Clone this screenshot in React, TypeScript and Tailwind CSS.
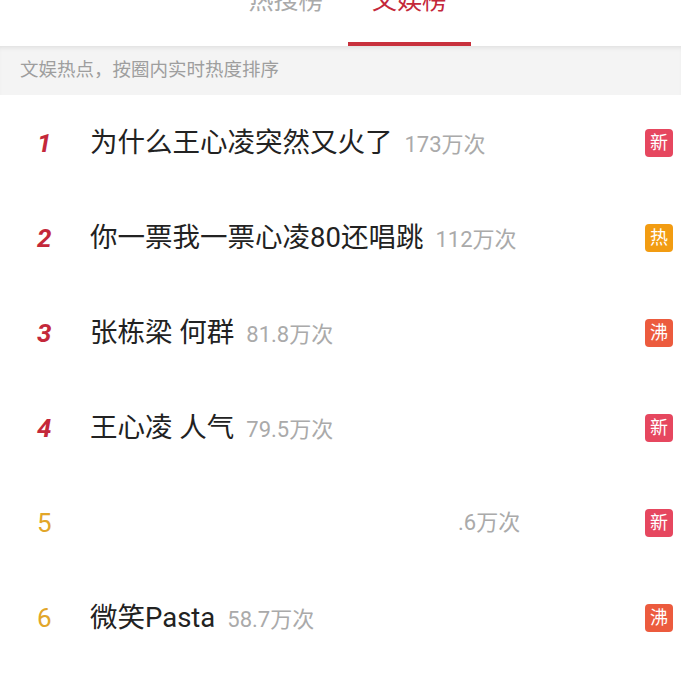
import React from 'react';

type Badge = 'new' | 'hot' | 'boil';

interface Item {
  rank: number;
  title: string;
  count: string;
  badge: Badge;
}

const items: Item[] = [
  { rank: 1, title: '为什么王心凌突然又火了', count: '173万次', badge: 'new' },
  { rank: 2, title: '你一票我一票心凌80还唱跳', count: '112万次', badge: 'hot' },
  { rank: 3, title: '张栋梁 何群', count: '81.8万次', badge: 'boil' },
  { rank: 4, title: '王心凌 人气', count: '79.5万次', badge: 'new' },
  { rank: 5, title: '', count: '.6万次', badge: 'new' },
  { rank: 6, title: '微笑Pasta', count: '58.7万次', badge: 'boil' },
];

const badgeStyle: Record<Badge, { label: string; cls: string }> = {
  new: { label: '新', cls: 'bg-[#e6475f]' },
  hot: { label: '热', cls: 'bg-[#f29c12]' },
  boil: { label: '沸', cls: 'bg-[#ec5b3e]' },
};

function Row({ item }: { item: Item }) {
  const top = item.rank <= 4;
  const b = badgeStyle[item.badge];
  return (
    <div className="flex items-center h-[95px] pl-[37px] pr-[8px]">
      <span
        className={`w-[53px] text-[26px] leading-none ${
          top ? 'text-[#c4283a] italic font-bold' : 'text-[#e2a629]'
        }`}
      >
        {item.rank}
      </span>
      <div className="flex-1 flex items-baseline">
        {item.title ? (
          <span className="text-[27.5px] text-[#222] leading-none">{item.title}</span>
        ) : (
          <span className="w-[356px]" />
        )}
        <span className="ml-[12px] text-[22px] text-[#aaa] leading-none">{item.count}</span>
      </div>
      <span
        className={`w-[28px] h-[28px] rounded-[4px] flex items-center justify-center text-white text-[18px] leading-none ${b.cls}`}
      >
        {b.label}
      </span>
    </div>
  );
}

export default function App() {
  return (
    <div
      className="w-[681px] h-[681px] bg-white overflow-hidden"
      style={{ fontFamily: 'Roboto, "Noto Sans CJK SC", sans-serif' }}
    >
      {/* Tabs */}
      <div className="h-[46px] flex pl-[224px] relative z-10 bg-white">
        <div className="w-[124px] flex justify-center">
          <span className="text-[25px] leading-[25px] -mt-[12px] text-[#aaa]">热搜榜</span>
        </div>
        <div className="w-[123px] flex flex-col items-center justify-between">
          <span className="text-[25px] leading-[25px] -mt-[12px] text-[#c4283a]">文娱榜</span>
          <span className="w-[123px] h-[4px] bg-[#c8303c]" />
        </div>
      </div>

      {/* Subtitle */}
      <div className="h-[49px] bg-[#f4f4f4] flex items-center pl-[20px] shadow-[inset_0_4px_4px_-2px_rgba(0,0,0,0.08)]">
        <span className="text-[18.5px] text-[#9e9e9e]">文娱热点，按圈内实时热度排序</span>
      </div>

      {/* List */}
      <div className="flex flex-col">
        {items.map(item => (
          <Row key={item.rank} item={item} />
        ))}
      </div>
    </div>
  );
}
